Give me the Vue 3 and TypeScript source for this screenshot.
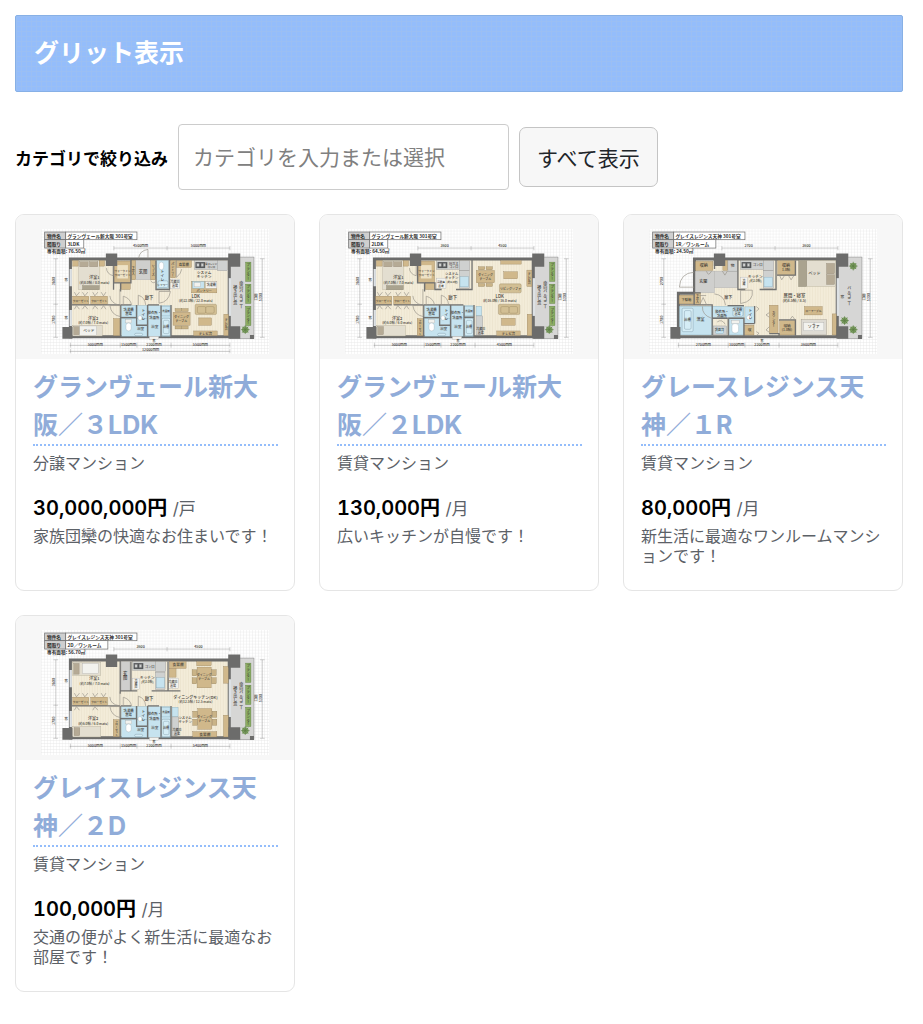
<script setup lang="ts">
import { computed, ref } from 'vue'

type Box = [x: number, y: number, w: number, h: number, kind: string]
type Note = [x: number, y: number, text: string, size?: number, vertical?: boolean]
interface Plan {
  shift: string
  name: string
  layout: string
  layoutWidth: number
  area: string
  top: string[]
  left: string[]
  ticks: number[]
  bottom: string[]
  total?: string
  studio?: boolean
  boxes: Box[]
  walls: string
  doors: string
  notes: Note[]
}
interface Listing {
  id: number
  title: string
  category: string
  price: string
  unit: string
  text: string
  plan: Plan
}

const bedroomCloset: Box[] = [
  [175, 259, 48, 25, 'wood'],
  [229, 259, 50, 25, 'wood'],
]
const closetNotes: Note[] = [
  [199, 275, 'クローゼット', 8],
  [254, 275, 'クローゼット', 8],
]
const wetRooms: Box[] = [
  [321, 287, 43, 34, 'water'],
  [367, 287, 30, 57, 'water'],
  [321, 325, 76, 54, 'water'],
  [400, 287, 68, 92, 'water'],
  [441, 290, 25, 28, 'water'],
  [441, 325, 26, 52, 'tub'],
  [446, 331, 17, 40, 'tub'],
  [333, 329, 18, 10, 'white'],
  [334, 339, 16, 24, 'bowl'],
  [370, 317, 12, 14, 'bowl'],
  [404, 379, 28, 9, 'white'],
  [360, 370, 24, 7, 'tub'],
]
const wetNotes: Note[] = [
  [342, 303, '洗濯機', 10],
  [342, 315, '置場', 10],
  [386, 314, 'トイレ', 11, true],
  [419, 313, '脱衣所・', 10],
  [419, 326, '洗面所', 10],
  [378, 360, '浴室', 11],
  [420, 354, '浴室', 11],
  [454, 355, '浴槽', 9],
  [454, 307, '洗面所', 8],
]
const wetWalls =
  'M172 285H223M229 285H318M318 285V380M318 323H366M366 285V346H399M399 285V380M439 287V322H469M439 322V380M469 285V380M319 285H399'
const bedDoors =
  'M296 152V198Q276 192 276 175M316 238V287Q287 279 286 258M286 287H317V320Q290 315 286 287M180 247L186 258L195 247M204 247L211 258L220 247M235 247L241 258L250 247M260 247L267 258L274 247M180 298L186 287L195 298M204 298L211 287L220 298M235 298L241 287L250 298M260 298L267 287L274 298M326 287V259Q347 265 351 285M371 286V256Q391 262 393 285'

function table(x: number, y: number, w: number, h: number): Box[] {
  return [
    [x + 6, y - 11, 19, 9, 'chair'],
    [x + w - 25, y - 11, 19, 9, 'chair'],
    [x + 6, y + h + 2, 19, 9, 'chair'],
    [x + w - 25, y + h + 2, 19, 9, 'chair'],
    [x, y, w, h, 'wood'],
  ]
}
function sideTable(x: number, y: number): Box[] {
  return [
    [x, y + 8, 14, 18, 'chair'],
    [x, y + 32, 14, 18, 'chair'],
    [x + 58, y + 8, 14, 18, 'chair'],
    [x + 58, y + 32, 14, 18, 'chair'],
    [x + 15, y, 42, 62, 'wood'],
  ]
}
function sofa(x: number, y: number): Box[] {
  return [
    [x, y, 64, 31, 'sofa'],
    [x + 7, y + 7, 25, 20, 'sofa'],
    [x + 32, y + 7, 25, 20, 'sofa'],
  ]
}
function kitchen(x: number, y: number): Box[] {
  return [
    [x, y, 68, 26, 'grey'],
    [x + 3, y + 4, 29, 18, 'stove'],
    [x + 7, y + 8, 7, 9, 'grey'],
    [x + 20, y + 8, 7, 9, 'grey'],
    [x + 68, y, 31, 30, 'grey'],
  ]
}

const plan3ldk: Plan = {
  shift: 'translate(0 0)',
  name: 'グランヴェール新大阪 301号室',
  layout: '3LDK',
  layoutWidth: 54,
  area: '76.50㎡',
  top: ['4500mm', '5000mm'],
  left: ['3600', '1700'],
  ticks: [168, 317, 367, 469, 645],
  bottom: ['5000mm', '1500mm', '2200mm', '5500mm'],
  total: '12000mm',
  boxes: [
    ...bedroomCloset,
    ...wetRooms,
    [191, 153, 63, 86, 'bed'],
    [196, 156, 25, 15, 'pillow'],
    [225, 156, 25, 15, 'pillow'],
    [175, 153, 16, 16, 'wood'],
    [254, 153, 16, 16, 'wood'],
    [204, 227, 50, 13, 'bench'],
    [299, 154, 49, 64, 'wood'],
    [308, 166, 32, 40, 'cream'],
    [320, 218, 27, 21, 'wood'],
    [363, 152, 50, 58, 'tile'],
    [350, 152, 13, 58, 'wood'],
    [408, 152, 15, 58, 'wood'],
    [426, 152, 36, 84, 'water'],
    [433, 157, 14, 23, 'bowl'],
    [430, 213, 30, 20, 'tub'],
    [467, 152, 16, 52, 'wood'],
    [485, 153, 45, 20, 'wood'],
    ...kitchen(524, 153),
    [467, 208, 28, 29, 'white'],
    [515, 215, 76, 34, 'wood'],
    [518, 215, 35, 20, 'water'],
    [523, 219, 19, 12, 'white'],
    [557, 215, 34, 20, 'white'],
    ...table(475, 307, 51, 39),
    ...sofa(541, 283),
    [552, 324, 38, 22, 'wood'],
    [537, 363, 70, 14, 'wood'],
    [627, 313, 14, 64, 'wood'],
    [174, 346, 89, 32, 'bed'],
    [178, 350, 17, 24, 'pillow'],
    [196, 348, 50, 28, 'white'],
    [297, 326, 19, 51, 'wood'],
  ].map(([x, y, w, h, k]): Box => {
    const counter = Number(x) >= 515 && Number(y) < 250
    return [Number(x) + (counter ? 15 : 0), Number(y), Number(w), Number(h), String(k)]
  }),
  walls:
    'M297 150V240M297 219H349V150M424 152V239H465M464 151V242M318 219V245M318 285V380M469 285V380M439 287V380M399 285V380M366 285V346H399M318 323H366M172 285H318M319 285H350M399 285H433',
  doors:
    bedDoors +
    'M400 119V146M400 119Q374 123 372 146M433 245H467Q462 277 433 280ZM408 213Q418 226 426 210M485 152V203Q500 190 501 178',
  notes: [
    ...closetNotes,
    ...wetNotes,
    [240, 209, '洋室1', 12],
    [240, 223, '(約8.0帖 / 8.0 mats)', 10],
    [236, 329, '洋室2', 12],
    [236, 343, '(約7.0帖 / 7.0 mats)', 10],
    [223, 366, 'ベッド', 11],
    [324, 186, 'ウォークイン', 8],
    [324, 198, 'クローゼット', 8],
    [385, 190, '玄関', 13],
    [356, 182, '下足入', 9, true],
    [416, 182, 'シューズ', 9, true],
    [443, 197, 'トイレ', 11, true],
    [444, 229, 'シャワー', 8],
    [474, 179, 'パントリー', 9, true],
    [507, 168, '食器棚', 10],
    [589, 165, '電子レンジ', 7],
    [589, 176, 'コンロ', 8],
    [568, 193, 'システム', 11],
    [568, 206, 'キッチン', 11],
    [481, 221, '冷蔵庫', 9],
    [481, 232, '置場', 9],
    [589, 229, '洗濯機', 9],
    [568, 246, 'パントリー', 9],
    [403, 266, '廊下', 13],
    [543, 263, 'LDK', 13],
    [543, 277, '(約22.0帖 / 22.0 mats)', 10],
    [500, 325, 'ダイニング', 9],
    [500, 337, 'テーブル', 9],
    [572, 374, 'テレビ台', 10],
    [634, 342, 'テレビ台', 9, true],
  ],
}

const plan2ldk: Plan = {
  shift: 'translate(-3 0)',
  name: 'グランヴェール新大阪 301号室',
  layout: '2LDK',
  layoutWidth: 54,
  area: '64.50㎡',
  top: ['3600', '4500'],
  left: ['3600', '1700'],
  ticks: [168, 317, 367, 469, 645],
  bottom: ['5000mm', '1500mm', '2200mm', '4500mm'],
  boxes: [
    ...bedroomCloset,
    ...wetRooms,
    [194, 153, 63, 86, 'bed'],
    [199, 156, 25, 15, 'pillow'],
    [228, 156, 25, 15, 'pillow'],
    [177, 153, 17, 16, 'wood'],
    [257, 153, 16, 16, 'wood'],
    [207, 227, 50, 13, 'bench'],
    [302, 154, 49, 64, 'wood'],
    [310, 166, 32, 40, 'cream'],
    [323, 218, 27, 21, 'wood'],
    ...kitchen(357, 153),
    [425, 183, 30, 52, 'grey'],
    [427, 201, 25, 30, 'water'],
    [357, 205, 28, 30, 'white'],
    ...table(476, 182, 54, 37),
    [549, 153, 61, 10, 'wood'],
    [558, 186, 41, 21, 'wood'],
    [545, 222, 65, 27, 'sofa'],
    [627, 181, 15, 49, 'wood'],
    ...sofa(542, 283),
    [551, 325, 41, 21, 'wood'],
    [537, 363, 70, 14, 'wood'],
    [628, 313, 14, 64, 'wood'],
    [475, 289, 17, 29, 'water'],
    [475, 318, 20, 57, 'grey'],
    [177, 346, 87, 32, 'bed'],
    [181, 350, 17, 24, 'pillow'],
    [299, 326, 19, 51, 'wood'],
  ],
  walls: wetWalls + 'M300 150V219H352V239H372M415 239H463V150M321 219V245M399 285H437',
  doors: bedDoors,
  notes: [
    ...closetNotes,
    ...wetNotes,
    [243, 209, '洋室1', 12],
    [243, 223, '(約7.0帖 / 7.0 mats)', 10],
    [239, 329, '洋室2', 12],
    [239, 343, '(約6.0帖 / 6.0 mats)', 10],
    [327, 186, 'ウォークイン', 8],
    [327, 198, 'クローゼット', 8],
    [408, 165, 'IHガス', 9],
    [408, 176, 'コンロ', 9],
    [402, 196, 'システム', 10],
    [402, 208, 'キッチン', 10],
    [404, 220, '(約2.0帖)', 8],
    [370, 219, '冷蔵庫', 8],
    [370, 230, '置場', 8],
    [405, 266, '廊下', 13],
    [546, 263, 'LDK', 13],
    [546, 277, '(約16.0帖 / 16.0 mats)', 10],
    [503, 198, 'ダイニング', 9],
    [503, 210, 'テーブル', 9],
    [578, 239, 'リビングソファ', 9],
    [634, 205, 'テレビ台', 9, true],
    [489, 361, '冷蔵庫', 9],
    [489, 372, '置場', 9],
    [572, 374, 'テレビ台', 10],
    [308, 352, 'クローゼット', 8, true],
  ],
}

const plan1r: Plan = {
  shift: 'translate(-3 0)',
  name: 'グレイスレジンス天神 301号室',
  layout: '1R／ワンルーム',
  layoutWidth: 126,
  area: '24.50㎡',
  top: ['2700', '3600'],
  left: ['2700', '1700'],
  ticks: [168, 317, 367, 469, 645],
  bottom: ['2700mm', '1000mm', '2200mm', '3600mm'],
  studio: true,
  boxes: [
    [222, 155, 52, 27, 'wood'],
    [221, 184, 58, 65, 'tile'],
    [279, 184, 69, 50, 'tile'],
    [304, 152, 14, 30, 'wood'],
    [319, 152, 29, 32, 'grey'],
    [173, 256, 45, 26, 'wood'],
    [220, 249, 17, 35, 'wood'],
    [174, 289, 98, 86, 'water'],
    [182, 295, 33, 70, 'tub'],
    [189, 302, 20, 56, 'tub'],
    [272, 289, 95, 34, 'water'],
    [334, 293, 30, 26, 'tub'],
    [275, 348, 40, 27, 'grey'],
    [283, 355, 23, 16, 'water'],
    [323, 326, 43, 49, 'water'],
    [330, 331, 23, 10, 'white'],
    [331, 341, 20, 28, 'bowl'],
    [370, 291, 28, 50, 'water'],
    [375, 316, 14, 14, 'bowl'],
    [369, 346, 28, 29, 'wood'],
    ...kitchen(357, 153),
    [425, 183, 30, 52, 'grey'],
    [427, 202, 25, 29, 'water'],
    [357, 202, 20, 33, 'white'],
    [468, 153, 52, 43, 'wood'],
    [531, 153, 110, 77, 'bed'],
    [531, 153, 24, 77, 'bench'],
    [614, 161, 24, 31, 'pillow'],
    [614, 195, 24, 29, 'pillow'],
    [443, 286, 26, 84, 'wood'],
    [548, 290, 53, 25, 'wood'],
    [474, 332, 46, 43, 'wood'],
    [538, 329, 76, 46, 'couch'],
    [546, 338, 30, 24, 'white'],
    [577, 338, 29, 24, 'white'],
    [631, 312, 12, 63, 'wood'],
  ],
  walls:
    'M218 249H238M279 151V178M349 151V239H371M414 239H463V151M466 196H521V152M218 250V285M172 285H274M272 286V375M272 325H318M320 325V378M320 325H367V378M318 287H367M399 288V341M399 341H367M472 330H521V377M443 371H472V380',
  doors:
    'M218 187Q176 190 174 232H218M278 252Q308 255 312 286M357 241H392Q397 275 357 281ZM234 257H254M235 284L245 263L255 284M255 184Q260 202 270 184M302 183L310 196L318 183M474 198L480 210L488 198M501 198L508 210L516 198M404 290L412 297L404 304M404 365L412 370L404 377M443 308L433 315L443 322M443 350L433 360L443 367M503 331L512 319L521 331M243 290Q241 315 270 325M287 336Q301 326 311 343',
  notes: [
    [247, 172, '収納', 12],
    [245, 220, '玄関', 12],
    [333, 172, '物', 11],
    [195, 273, '下駄箱', 10],
    [228, 266, '下足入', 9, true],
    [320, 266, '廊下', 12],
    [198, 332, '浴槽', 10],
    [237, 332, '浴室', 12],
    [301, 310, '脱衣所・', 10],
    [301, 322, '洗面所', 10],
    [348, 304, '洗濯機', 9],
    [348, 315, '置場', 9],
    [294, 363, '洗面台', 9],
    [386, 313, 'トイレ', 11, true],
    [384, 364, '収', 11],
    [408, 170, 'コンロ', 10],
    [401, 205, 'キッチン', 11],
    [401, 218, '(約2.0帖)', 9],
    [367, 218, '冷蔵', 9, true],
    [493, 172, '収納', 12],
    [493, 185, '1.0帖', 10],
    [578, 196, 'ベッド', 12],
    [518, 262, '居間・寝室', 13],
    [518, 275, '(約8.5帖 / 8.5)', 11],
    [456, 328, 'カウンター', 10, true],
    [575, 305, 'ローテーブル', 8],
    [496, 352, '収納', 11],
    [496, 364, '(1.0帖)', 10],
    [576, 354, 'ソファ', 12],
    [661, 260, '窓', 11, true],
  ],
}

const plan2d: Plan = {
  shift: 'translate(0 4)',
  name: 'グレイスレジンス天神 301号室',
  layout: '2D／ワンルーム',
  layoutWidth: 126,
  area: '56.70㎡',
  top: ['3600', '4500'],
  left: ['3600', '1700'],
  ticks: [168, 317, 367, 469, 645],
  bottom: ['5000mm', '1500mm', '2200mm', '5400mm'],
  boxes: [
    ...bedroomCloset.map(([x, y, w, h, k]): Box => [x, y - 4, w, h, k]),
    ...wetRooms.map(([x, y, w, h, k]): Box => [x, y - 4, w, h, k]),
    [175, 150, 84, 40, 'bed'],
    [178, 154, 16, 32, 'pillow'],
    [204, 154, 47, 30, 'white'],
    [320, 149, 26, 85, 'tile'],
    ...kitchen(354, 149),
    [422, 180, 29, 52, 'grey'],
    [425, 197, 24, 30, 'water'],
    [353, 198, 22, 33, 'white'],
    [464, 149, 50, 20, 'wood'],
    [464, 169, 20, 26, 'wood'],
    [462, 198, 29, 30, 'white'],
    [546, 149, 43, 12, 'wood'],
    ...sideTable(532, 165),
    [626, 163, 14, 50, 'wood'],
    [472, 285, 18, 29, 'water'],
    [472, 314, 20, 56, 'grey'],
    ...sideTable(534, 289),
    [534, 358, 72, 16, 'wood'],
    [626, 309, 14, 65, 'wood'],
    [175, 342, 84, 32, 'bed'],
    [179, 346, 17, 24, 'pillow'],
    [296, 322, 19, 51, 'wood'],
  ],
  walls:
    'M317 147V245M317 236H368M349 149V235M411 236H497M460 148V235M317 281V376M318 319H366M366 281V342H399M399 281V376M439 283V376M469 281V376M172 281H317M319 281H350M399 281H433',
  doors:
    'M316 238V281Q287 277 286 254M286 283H317V316Q290 311 286 283M180 243L186 254L195 243M204 243L211 254L220 243M235 243L241 254L250 243M260 243L267 254L274 243M180 294L186 283L195 294M235 294L241 283L250 294M326 283V255Q347 261 351 281M371 282V252Q391 258 393 281',
  notes: [
    ...closetNotes.map(([x, y, t, s]): Note => [x, y - 4, t, s]),
    ...wetNotes.map(([x, y, t, s, v]): Note => [x, y - 4, t, s, v]),
    [240, 205, '洋室1', 12],
    [240, 219, '(約7.0帖 / 7.0 mats)', 10],
    [236, 323, '洋室2', 12],
    [236, 337, '(約6.0帖 / 6.0 mats)', 10],
    [332, 190, '玄関', 13, true],
    [405, 168, 'コンロ', 10],
    [398, 201, 'キッチン', 11],
    [398, 214, '(約2.0帖)', 9],
    [364, 214, '冷蔵庫', 9, true],
    [490, 163, '食器棚', 11],
    [475, 214, '冷蔵庫', 9],
    [475, 225, '置場', 9],
    [403, 262, '廊下', 13],
    [542, 259, 'ダイニングキッチン(DK)', 12],
    [542, 273, '(約12.5帖 / 12.5 mats)', 10],
    [568, 192, 'ダイニング', 9],
    [568, 204, 'テーブル', 9],
    [569, 316, 'ダイニング', 9],
    [569, 328, 'テーブル', 9],
    [511, 319, 'システム', 10],
    [511, 332, 'キッチン', 10],
    [487, 356, '冷蔵庫', 9],
    [487, 367, '置場', 9],
    [570, 370, '食器棚', 11],
    [306, 348, 'クローゼット', 8, true],
  ],
}

const listings: Listing[] = [
  { id: 1, title: 'グランヴェール新大阪／３LDK', category: '分譲マンション', price: '30,000,000円', unit: '/戸', text: '家族団欒の快適なお住まいです！', plan: plan3ldk },
  { id: 2, title: 'グランヴェール新大阪／２LDK', category: '賃貸マンション', price: '130,000円', unit: '/月', text: '広いキッチンが自慢です！', plan: plan2ldk },
  { id: 3, title: 'グレースレジンス天神／１R', category: '賃貸マンション', price: '80,000円', unit: '/月', text: '新生活に最適なワンルームマンションです！', plan: plan1r },
  { id: 4, title: 'グレイスレジンス天神／２D', category: '賃貸マンション', price: '100,000円', unit: '/月', text: '交通の便がよく新生活に最適なお部屋です！', plan: plan2d },
]

const keyword = ref('')
const visible = computed(() => listings.filter((l) => l.category.includes(keyword.value.trim())))
const planters = [157, 223, 289]

function mid(ticks: number[], i: number): number {
  return (ticks[i] + ticks[i + 1]) / 2
}
</script>

<template>
  <main class="page">
    <h2 class="banner">グリット表示</h2>

    <div class="filter">
      <label class="filter-label" for="category">カテゴリで絞り込み</label>
      <input id="category" v-model="keyword" class="filter-input" type="text" placeholder="カテゴリを入力または選択" />
      <button class="filter-button" type="button" @click="keyword = ''">すべて表示</button>
    </div>

    <div class="grid">
      <article v-for="item in visible" :key="item.id" class="card">
        <div class="thumb">
          <svg class="plan" viewBox="80 58 682 374" role="img" :aria-label="item.title + 'の間取り図'">
            <defs>
              <pattern :id="'mesh' + item.id" width="9" height="9" patternUnits="userSpaceOnUse">
                <rect width="9" height="9" fill="#fff" />
                <path d="M0 0H9M0 0V9" stroke="#e2e2e2" stroke-width="2" />
              </pattern>
              <pattern :id="'floor' + item.id" width="8" height="8" patternUnits="userSpaceOnUse">
                <rect width="8" height="8" fill="#f3ecd9" />
                <path d="M0 0V8" stroke="#e3dac3" stroke-width="2" />
              </pattern>
            </defs>
            <rect x="80" y="58" width="682" height="374" :fill="`url(#mesh${item.id})`" />

            <g class="caption">
              <rect class="head" x="91" y="67" width="63" height="23" />
              <rect x="154" y="67" width="213" height="23" />
              <rect class="head" x="91" y="90" width="63" height="25" />
              <rect x="154" y="90" :width="item.plan.layoutWidth" height="25" />
              <text x="98" y="84">物件名</text>
              <text x="159" y="84">{{ item.plan.name }}</text>
              <text x="98" y="108">間取り</text>
              <text x="159" y="108">{{ item.plan.layout }}</text>
              <text x="98" y="131">専有面積: {{ item.plan.area }}</text>
            </g>

            <rect class="balcony" x="646" y="142" width="71" height="244" />
            <path
              :d="item.plan.studio ? 'M216 148H643V380H168V250H216Z' : 'M168 148H643V380H168Z'"
              :fill="`url(#floor${item.id})`"
              class="shell"
            />
            <path v-if="!item.plan.studio" class="window" d="M169 178V229M169 300V348" />
            <path class="window" d="M645 205V318" />

            <g :transform="item.plan.shift">
              <rect
                v-for="(b, i) in item.plan.boxes"
                :key="i"
                :x="b[0]"
                :y="b[1]"
                :width="b[2]"
                :height="b[3]"
                :rx="b[4] === 'bowl' ? 8 : b[4] === 'sofa' || b[4] === 'tub' ? 4 : 0"
                :class="b[4]"
              />
              <path class="wall" :d="item.plan.walls" />
              <path class="door" :d="item.plan.doors" />
              <text
                v-for="(n, i) in item.plan.notes"
                :key="i"
                class="note"
                :class="{ upright: n[4] }"
                :x="n[0]"
                :y="n[1]"
                :font-size="n[3] ?? 11"
              >{{ n[2] }}</text>
            </g>

            <path class="column" d="M274 131H308V169H274ZM640 131H676V171H640ZM144 351H174V386H144ZM641 349H676V386H641ZM705 375H717V387H705Z" />

            <template v-if="!item.plan.studio">
              <g v-for="y in planters" :key="y">
                <rect class="planter" x="692" :y="y" width="16" height="58" />
                <text class="note upright" x="700" :y="y + 29" font-size="10">プランター</text>
              </g>
            </template>
            <g v-for="p in item.plan.studio ? [[691, 169], [665, 332], [691, 359]] : [[691, 359]]" :key="p[0] + '-' + p[1]">
              <circle class="leaf" :cx="p[0]" :cy="p[1]" r="10" />
              <path class="vein" :d="`M${p[0] - 13} ${p[1]}h26M${p[0]} ${p[1] - 13}v26M${p[0] - 9} ${p[1] - 9}l18 18M${p[0] + 9} ${p[1] - 9}l-18 18`" />
            </g>
            <text v-if="item.plan.studio" class="note upright" x="679" y="260" font-size="12">バルコニー</text>
            <template v-else>
              <text class="note upright" x="679" y="257" font-size="12">南向バルコニー</text>
              <text class="note upright" x="661" y="257" font-size="12">掃き出し窓</text>
            </template>

            <path class="measure" d="M298 115H645M298 109V122M457 109V122M645 109V122M124 147V382M117 147H131M117 283H131M117 382H131M742 147V382M735 147H749M735 382H749M166 406H645" />
            <path v-for="t in item.plan.ticks" :key="t" class="measure" :d="`M${t} 398v15`" />
            <path v-if="item.plan.total" class="measure" d="M166 424H645M168 417V430M645 417V430" />
            <text class="note" x="378" y="112" font-size="11">{{ item.plan.top[0] }}</text>
            <text class="note" x="551" y="112" font-size="11">{{ item.plan.top[1] }}</text>
            <text class="note" font-size="11" transform="translate(121 214) rotate(-90)">{{ item.plan.left[0] }}</text>
            <text class="note" font-size="11" transform="translate(121 330) rotate(-90)">{{ item.plan.left[1] }}</text>
            <text class="note upright" x="723" y="262" font-size="11">間口</text>
            <text class="note" font-size="11" transform="translate(740 262) rotate(-90)">5300</text>
            <text class="note" x="418" y="397" font-size="9">窓</text>
            <text
              v-for="(b, i) in item.plan.bottom"
              :key="b"
              class="note"
              :x="mid(item.plan.ticks, i)"
              y="408"
              font-size="11"
            >{{ b }}</text>
            <text v-if="item.plan.total" class="note" x="408" y="424" font-size="11">{{ item.plan.total }}</text>
            <text v-if="!item.plan.studio" class="note upright" x="155" y="210" font-size="10">窓</text>
            <text v-if="!item.plan.studio" class="note upright" x="155" y="323" font-size="10">窓</text>
          </svg>
        </div>
        <div class="body">
          <h3 class="title">{{ item.title }}</h3>
          <p class="category">{{ item.category }}</p>
          <p class="price"><strong>{{ item.price }}</strong> <span class="unit">{{ item.unit }}</span></p>
          <p class="text">{{ item.text }}</p>
        </div>
      </article>
    </div>
  </main>
</template>

<style>
body {
  margin: 0;
  background: #fff;
}
</style>

<style scoped>
.page {
  box-sizing: border-box;
  padding: 15px 20px 24px 15px;
  font-family: Inter, "Noto Sans CJK JP", sans-serif;
  color: #000;
}
.banner {
  margin: 0 0 32px;
  padding: 18px 18px 19px;
  border: 1px solid #87b0e6;
  border-radius: 2px;
  background-color: #94bdfb;
  background-image:
    linear-gradient(90deg, #9bbff3 1px, transparent 1px),
    linear-gradient(#9bbff3 1px, transparent 1px);
  background-size: 5px 5px;
  color: #fff;
  font-size: 25px;
  line-height: 38px;
  font-weight: 700;
}
.filter {
  display: flex;
  align-items: center;
  gap: 10px;
  margin-bottom: 24px;
}
.filter-label {
  font-size: 17px;
  font-weight: 700;
}
.filter-input {
  box-sizing: border-box;
  width: 331px;
  height: 66px;
  padding: 0 14px;
  border: 1px solid #ccc;
  border-radius: 4px;
  background: #fff;
  color: #212529;
  font: inherit;
  font-size: 21px;
}
.filter-input::placeholder {
  color: #808080;
  opacity: 1;
}
.filter-button {
  height: 60px;
  padding: 0 17px;
  border: 1px solid #c4c4c4;
  border-radius: 7px;
  background: #f7f7f7;
  color: #212529;
  font: inherit;
  font-size: 21px;
  cursor: pointer;
}
.grid {
  display: grid;
  grid-template-columns: repeat(3, minmax(0, 1fr));
  gap: 24px;
}
.card {
  overflow: hidden;
  border: 1px solid #e5e5e5;
  border-radius: 9px;
  background: #fff;
}
.thumb {
  padding: 14px 25px 5px;
  background: #f7f7f7;
}
.plan {
  display: block;
  width: 100%;
  font-family: "Noto Sans CJK JP", sans-serif;
}
.body {
  padding: 9px 16px 24px 17px;
}
.title {
  margin: 0;
  border-bottom: 2px dotted #94bdfb;
  color: #90acd9;
  font-size: 25px;
  line-height: 38px;
  font-weight: 700;
}
.category,
.text {
  margin: 7px 0 0;
  color: #5c6167;
  font-size: 16px;
  line-height: 20px;
}
.text {
  margin-top: 5px;
}
.price {
  margin: 23px 0 0;
  font-size: 20px;
  line-height: 24px;
  font-variant-numeric: tabular-nums;
}
.price strong {
  font-weight: 600;
}
.unit {
  color: #5c6167;
  font-size: 17px;
}

.caption rect {
  fill: #fff;
  stroke: #666;
  stroke-width: 2;
}
.caption .head {
  fill: #cfcfcf;
}
.caption text {
  fill: #2c2c2c;
  font-size: 14px;
  font-weight: 600;
}
.shell {
  stroke: #6c6c6b;
  stroke-width: 9;
}
.column {
  fill: #6c6c6b;
}
.balcony {
  fill: #d6d6d5;
  stroke: #999;
  stroke-width: 2;
}
.window {
  fill: none;
  stroke: #dde1e4;
  stroke-width: 7;
}
.wall {
  fill: none;
  stroke: #727271;
  stroke-width: 4;
}
.door {
  fill: none;
  stroke: #99958b;
  stroke-width: 2;
}
.measure {
  fill: none;
  stroke: #777;
  stroke-width: 1;
}
.note {
  fill: #3d3a35;
  font-weight: 500;
  text-anchor: middle;
}
.upright {
  writing-mode: vertical-rl;
}
.wood {
  fill: #d0b88b;
  stroke: #927d58;
}
.chair {
  fill: #c9b387;
  stroke: #8d7a56;
}
.sofa {
  fill: #d2bf94;
  stroke: #8d7a56;
}
.couch {
  fill: #dedbd3;
  stroke: #8b8578;
}
.bench {
  fill: #aaa38f;
  stroke: #8d8675;
}
.cream {
  fill: #eee2c6;
}
.bed {
  fill: #e3ded0;
  stroke: #aaa28d;
}
.pillow {
  fill: #b5aa95;
  stroke: #8f8573;
}
.water {
  fill: #c6e3ef;
  stroke: #7fa3b3;
}
.tub {
  fill: #d5edf6;
  stroke: #65818e;
}
.bowl {
  fill: #fff;
  stroke: #8ca0aa;
}
.white {
  fill: #f2f2ee;
  stroke: #aaa;
}
.grey {
  fill: #cfd1d0;
  stroke: #8b8b8b;
}
.stove {
  fill: #55585a;
}
.tile {
  fill: #cfcfcd;
  stroke: #aaa;
}
.planter {
  fill: #8cae64;
  stroke: #55733b;
}
.leaf {
  fill: #7fa065;
}
.vein {
  stroke: #5a7d42;
  stroke-width: 2;
}
</style>
